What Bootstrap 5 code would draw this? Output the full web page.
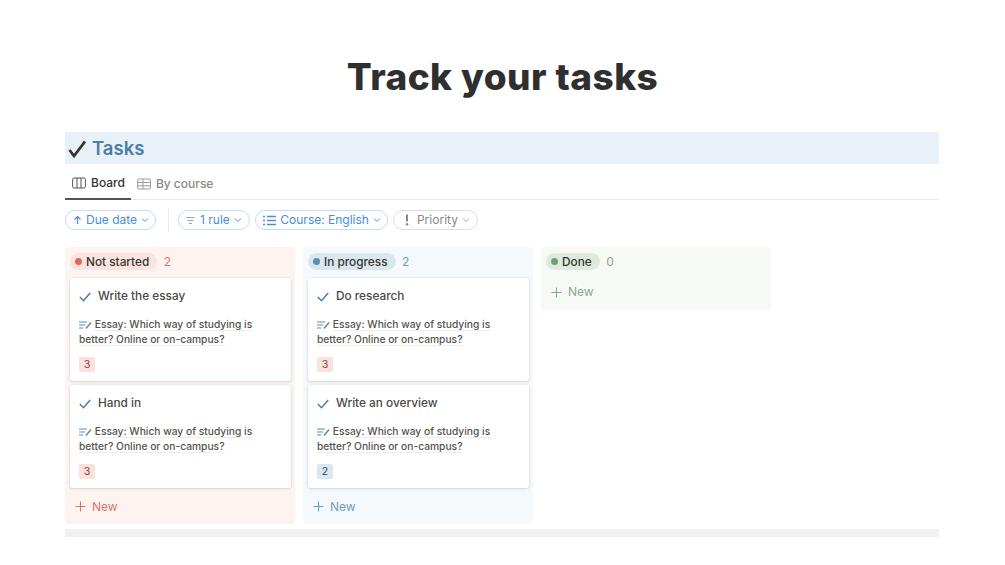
<!DOCTYPE html>
<html lang="en">
<head>
<meta charset="utf-8">
<title>Track your tasks</title>
<link href="https://cdn.jsdelivr.net/npm/bootstrap@5.3.0/dist/css/bootstrap.min.css" rel="stylesheet">
<style>
html,body{height:565px;overflow:hidden;background:#fff}
body{font-family:Inter,"Liberation Sans",sans-serif;color:#37352f}
.page-h{font-family:Inter,"Open Sans",sans-serif;font-weight:800;font-size:37px;line-height:46px;color:#2f2f2f;text-align:center;padding-top:54px;height:132px;margin:0;letter-spacing:.45px}
.frame{margin:0 66px 0 65px}
.hero{height:32px;background:#e8f1f7;padding:1px 0 0 2px;font-size:18.500px;font-weight:600;color:#4a7ea6;gap:4px}
.tabs-row{height:36px;border-bottom:1px solid #e9e9e7;gap:0}
.tab-it{height:36px;padding:3px 7px 0;font-size:12px;font-weight:500;color:#8a8985;gap:5px;margin-bottom:-1px}
.tab-it.on{color:#37352f;border-bottom:2px solid #55534e;padding-right:6px}
.tab-it.off{padding-left:6px}
.filters{height:40px;margin-bottom:7px;gap:5px}
.chip{height:20px;border:1px solid #c5dcf5;border-radius:10px;font-size:12px;color:#4b8be0;padding:0 6px 0 7px;gap:4px;white-space:nowrap}
.chip.mute{border-color:#dfdedb;color:#8a8985;padding-right:7px}
.chip-tight{padding:0 7.500px 0 6px}
.vsep{width:1px;height:24px;background:#ececea;margin:0 4px 0 7px}
.board{gap:8px;align-items:flex-start}
.lane{width:230px;border-radius:4px;padding:6px 4px 0 5px}
.lane-r{background:#fdf4f2;height:277px}
.lane-b{background:#f5f9fc;height:277px}
.lane-g{background:#f7f9f6;height:63px}
.lane-head{height:17px;margin-bottom:8px;gap:6.500px;font-size:12px}
.pill{height:17px;border-radius:9px;padding:2px 8px 0 5px;gap:4px;font-size:11.800px;font-weight:500;color:#37352f}
.dot{width:7px;height:7px;border-radius:50%;display:inline-block;margin-top:-2px}
.pill-r{background:#fbe4e0}.pill-r .dot{background:#d9685c}
.pill-b{background:#d9e7f0}.pill-b .dot{background:#5b8db5}
.pill-g{background:#dcebdc}.pill-g .dot{background:#6f9e78}
.cnt-r{color:#d9776b;padding-top:1px}.cnt-b{color:#6d9cc0;padding-top:1px}.cnt-g{color:#8aa98f;padding-top:1px}
.tcard{height:102.500px;margin-bottom:4.500px;background:#fff;border-radius:3px;box-shadow:0 0 0 1px rgba(15,15,15,.025),0 1px 3px rgba(15,15,15,.13);padding:10px 9px 0}
.tcard-top{height:18px;font-size:11.800px;font-weight:500;color:#4a4945;gap:7px}
.tcard-rel{margin:11px 0 0;font-size:10.250px;line-height:15px;font-weight:500;color:#55534e}
.tcard-rel span{border-bottom:1px solid #ececea}
.num{display:inline-block;width:16px;height:15px;line-height:15px;border-radius:2px;text-align:center;font-size:10.500px;margin-top:10px}
.num-r{background:#fbe0dc;color:#7b4a44}
.num-b{background:#d9e7f0;color:#3d4a55}
.new-row{height:18px;margin-top:10px;gap:6px;font-size:12px;padding-left:5px}
.lane-g .new-row{margin-top:13px}
.new-r{color:#d9776b}.new-b{color:#6d9cc0}.new-g{color:#8aa98f}
.footer-strip{height:8px;margin-top:5px;background:#f1f1ef}
</style>
</head>
<body>
<h1 class="page-h">Track your tasks</h1>
<div class="frame">
  <div class="hero d-flex align-items-center">
    <svg width="21" height="20" viewBox="0 0 21 20"><path d="M2.500 11l4.500 6L18 2.500" fill="none" stroke="#37352f" stroke-width="2.800"/></svg>
    <span>Tasks</span>
  </div>
  <div class="tabs-row d-flex">
    <div class="tab-it on d-flex align-items-center">
      <svg width="14" height="12" viewBox="0 0 14 12"><rect x=".6" y="1" width="12.800" height="10" rx="1.500" fill="none" stroke="#55534e"/><path d="M5 1v10M9 1v10" stroke="#55534e"/></svg>
      <span>Board</span>
    </div>
    <div class="tab-it off d-flex align-items-center">
      <svg width="14" height="12" viewBox="0 0 14 12"><rect x=".6" y="1" width="12.800" height="10" rx="1" fill="none" stroke="#9b9a97"/><path d="M.6 4.500h12.800M.6 7.800h12.800M6 1v10" stroke="#9b9a97"/></svg>
      <span>By course</span>
    </div>
  </div>
  <div class="filters d-flex align-items-center">
    <div class="chip d-flex align-items-center">
      <svg width="9" height="10" viewBox="0 0 9 10"><path d="M4.500 9V1.500M1.500 4.500l3-3 3 3" fill="none" stroke="#4b8be0" stroke-width="1.200"/></svg>
      <span>Due date</span>
      <svg width="8" height="6" viewBox="0 0 8 6"><path d="M1 1.500l3 3 3-3" fill="none" stroke="#4b8be0"/></svg>
    </div>
    <div class="vsep"></div>
    <div class="chip chip-tight d-flex align-items-center">
      <svg width="11" height="9" viewBox="0 0 11 9"><path d="M1 1.500h9M2.500 4.500h6M4 7.500h3" stroke="#7fa9e3" stroke-width="1.100"/></svg>
      <span>1 rule</span>
      <svg width="8" height="6" viewBox="0 0 8 6"><path d="M1 1.500l3 3 3-3" fill="none" stroke="#4b8be0"/></svg>
    </div>
    <div class="chip d-flex align-items-center">
      <svg width="13" height="11" viewBox="0 0 13 11"><path d="M4 1.500h9M4 5.500h9M4 9.500h9M0 1.500h2M0 5.500h2M0 9.500h2" stroke="#4b8be0" stroke-width="1.300"/></svg>
      <span>Course: English</span>
      <svg width="8" height="6" viewBox="0 0 8 6"><path d="M1 1.500l3 3 3-3" fill="none" stroke="#4b8be0"/></svg>
    </div>
    <div class="chip mute d-flex align-items-center">
      <svg width="12" height="12" viewBox="0 0 12 12"><path d="M6 .5v7" stroke="#8a8985" stroke-width="2"/><circle cx="6" cy="10.300" r="1.200" fill="#8a8985"/></svg>
      <span>Priority</span>
      <svg width="8" height="6" viewBox="0 0 8 6"><path d="M1 1.500l3 3 3-3" fill="none" stroke="#a9a8a5"/></svg>
    </div>
  </div>
  <div class="board d-flex">
    <section class="lane lane-r">
      <div class="lane-head d-flex align-items-center"><span class="pill pill-r d-inline-flex align-items-center"><i class="dot"></i>Not started</span><span class="cnt-r">2</span></div>
      <article class="tcard">
        <div class="tcard-top d-flex align-items-center"><svg width="12" height="10" viewBox="0 0 12 10"><path d="M.8 5l3.700 3.700L11.200 1" fill="none" stroke="#4a7ea6" stroke-width="1.500"/></svg><span>Write the essay</span></div>
        <p class="tcard-rel"><svg width="13" height="9" viewBox="0 0 13 9"><path d="M0 1h8M0 4h6M0 7h4" stroke="#5b8db5" stroke-width="1.100"/><path d="M7 7.500L12 1.500" stroke="#5b8db5" stroke-width="1.500"/></svg> <span>Essay: Which way of studying is</span><br><span>better? Online or on-campus?</span></p>
        <span class="num num-r">3</span>
      </article>
      <article class="tcard">
        <div class="tcard-top d-flex align-items-center"><svg width="12" height="10" viewBox="0 0 12 10"><path d="M.8 5l3.700 3.700L11.200 1" fill="none" stroke="#4a7ea6" stroke-width="1.500"/></svg><span>Hand in</span></div>
        <p class="tcard-rel"><svg width="13" height="9" viewBox="0 0 13 9"><path d="M0 1h8M0 4h6M0 7h4" stroke="#5b8db5" stroke-width="1.100"/><path d="M7 7.500L12 1.500" stroke="#5b8db5" stroke-width="1.500"/></svg> <span>Essay: Which way of studying is</span><br><span>better? Online or on-campus?</span></p>
        <span class="num num-r">3</span>
      </article>
      <div class="new-row new-r d-flex align-items-center"><svg width="11" height="11" viewBox="0 0 11 11"><path d="M5.500 .5v10M.5 5.500h10" stroke="#d9776b"/></svg><span>New</span></div>
    </section>
    <section class="lane lane-b">
      <div class="lane-head d-flex align-items-center"><span class="pill pill-b d-inline-flex align-items-center"><i class="dot"></i>In progress</span><span class="cnt-b">2</span></div>
      <article class="tcard">
        <div class="tcard-top d-flex align-items-center"><svg width="12" height="10" viewBox="0 0 12 10"><path d="M.8 5l3.700 3.700L11.200 1" fill="none" stroke="#4a7ea6" stroke-width="1.500"/></svg><span>Do research</span></div>
        <p class="tcard-rel"><svg width="13" height="9" viewBox="0 0 13 9"><path d="M0 1h8M0 4h6M0 7h4" stroke="#5b8db5" stroke-width="1.100"/><path d="M7 7.500L12 1.500" stroke="#5b8db5" stroke-width="1.500"/></svg> <span>Essay: Which way of studying is</span><br><span>better? Online or on-campus?</span></p>
        <span class="num num-r">3</span>
      </article>
      <article class="tcard">
        <div class="tcard-top d-flex align-items-center"><svg width="12" height="10" viewBox="0 0 12 10"><path d="M.8 5l3.700 3.700L11.200 1" fill="none" stroke="#4a7ea6" stroke-width="1.500"/></svg><span>Write an overview</span></div>
        <p class="tcard-rel"><svg width="13" height="9" viewBox="0 0 13 9"><path d="M0 1h8M0 4h6M0 7h4" stroke="#5b8db5" stroke-width="1.100"/><path d="M7 7.500L12 1.500" stroke="#5b8db5" stroke-width="1.500"/></svg> <span>Essay: Which way of studying is</span><br><span>better? Online or on-campus?</span></p>
        <span class="num num-b">2</span>
      </article>
      <div class="new-row new-b d-flex align-items-center"><svg width="11" height="11" viewBox="0 0 11 11"><path d="M5.500 .5v10M.5 5.500h10" stroke="#6d9cc0"/></svg><span>New</span></div>
    </section>
    <section class="lane lane-g">
      <div class="lane-head d-flex align-items-center"><span class="pill pill-g d-inline-flex align-items-center"><i class="dot"></i>Done</span><span class="cnt-g">0</span></div>
      <div class="new-row new-g d-flex align-items-center"><svg width="11" height="11" viewBox="0 0 11 11"><path d="M5.500 .5v10M.5 5.500h10" stroke="#8aa98f"/></svg><span>New</span></div>
    </section>
  </div>
  <div class="footer-strip"></div>
</div>
<script src="https://cdn.jsdelivr.net/npm/bootstrap@5.3.0/dist/js/bootstrap.bundle.min.js"></script>
</body>
</html>
